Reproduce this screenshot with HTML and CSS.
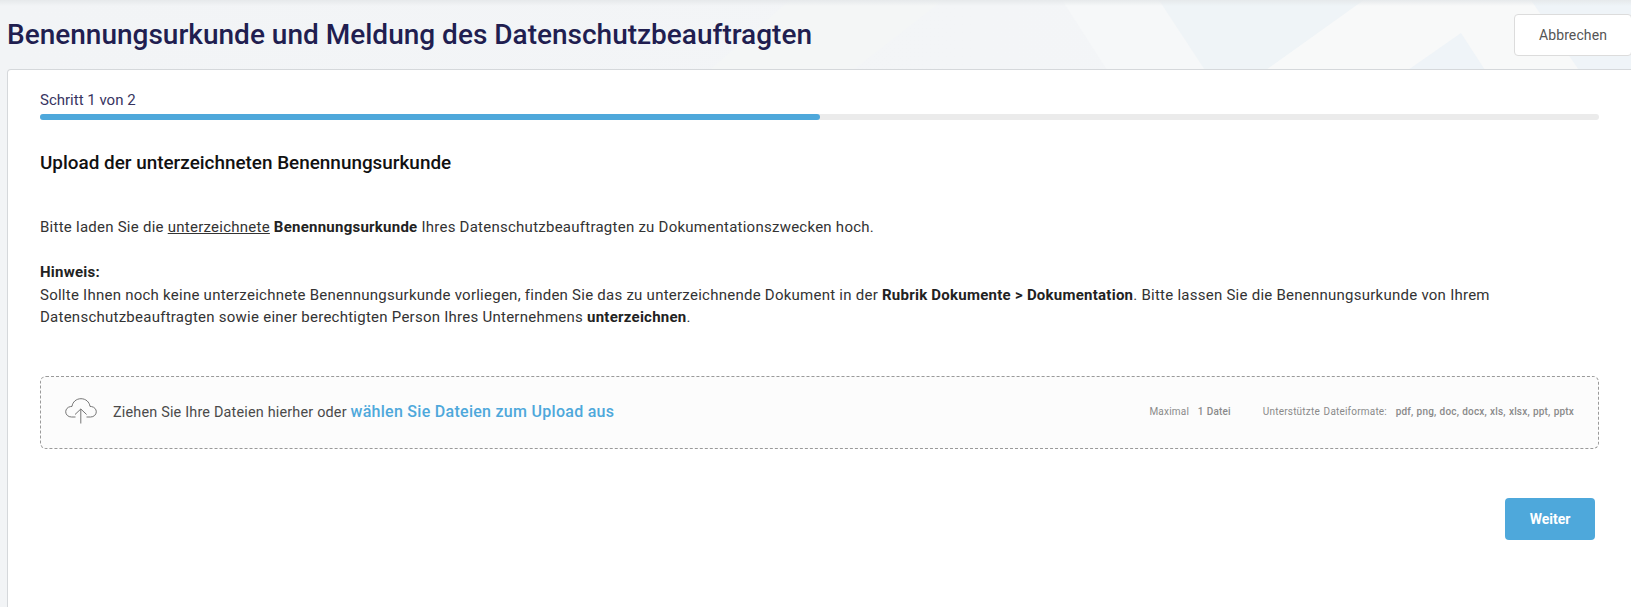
FILE: index.html
```html
<!DOCTYPE html>
<html lang="de">
<head>
<meta charset="utf-8">
<title>Benennungsurkunde</title>
<link rel="stylesheet" href="styles.css">
</head>
<body>
<svg class="backdrop" width="1631" height="70" viewBox="0 0 1631 70" aria-hidden="true">
  <polygon points="790,0 943,0 853,70 710,70" fill="#f4f6f6"/>
  <polygon points="1062,0 1159,0 1205,70 1107,70" fill="#f6f8f9"/>
  <polygon points="1159,0 1364,0 1266,70 1205,70" fill="#eff4f7"/>
  <polygon points="1364,0 1531,0 1579,70 1266,70" fill="#f8f9f9"/>
  <polygon points="1461,33 1485,70 1408,70" fill="#eff4f8"/>
  <polygon points="1531,0 1631,0 1631,70 1579,70" fill="#eff4f8"/>
</svg>
<div class="page">
  <header class="head">
    <h1 class="title">Benennungsurkunde und Meldung des Datenschutzbeauftragten</h1>
    <button class="cancel">Abbrechen</button>
  </header>
  <main class="card">
    <div class="step">Schritt 1 von 2</div>
    <div class="track"><div class="fill"></div></div>
    <h2 class="subtitle">Upload der unterzeichneten Benennungsurkunde</h2>
    <p class="para">Bitte laden Sie die <u>unterzeichnete</u> <b>Benennungsurkunde</b> Ihres Datenschutzbeauftragten zu Dokumentationszwecken hoch.</p>
    <p class="para hint"><b>Hinweis:</b><br>Sollte Ihnen noch keine unterzeichnete Benennungsurkunde vorliegen, finden Sie das zu unterzeichnende Dokument in der <b>Rubrik Dokumente &gt; Dokumentation</b>. Bitte lassen Sie die Benennungsurkunde von Ihrem Datenschutzbeauftragten sowie einer berechtigten Person Ihres Unternehmens <b>unterzeichnen</b>.</p>
    <div class="drop">
      <svg class="cloud" width="32" height="26" viewBox="0 0 32 26" fill="none" stroke="#757575" stroke-width="1">
        <path d="M10.500 19H6.500C3.200 19 .7 16.700 .7 13.800c0-2.600 2-4.800 4.700-5.200l1.600-.2C7.600 4 11.200 .7 16 .7s8.400 3.300 9 7.700l1.600.2c2.700.4 4.700 2.600 4.700 5.200 0 2.900-2.500 5.200-5.800 5.200H21.500"/>
        <path d="M15.800 25.500V11M10 16.500l5.800-5.500 5.800 5.500"/>
      </svg>
      <span class="drop-text">Ziehen Sie Ihre Dateien hierher oder <a class="pick">wählen Sie Dateien zum Upload aus</a></span>
      <span class="meta max">Maximal <b>1 Datei</b></span>
      <span class="meta">Unterstützte Dateiformate: <b>pdf, png, doc, docx, xls, xlsx, ppt, pptx</b></span>
    </div>
    <div class="actions"><button class="next">Weiter</button></div>
  </main>
</div>
</body>
</html>
```
FILE: styles.css
```css
* { box-sizing: border-box; }
html, body { margin: 0; height: 607px; overflow: hidden; }
body {
  position: relative;
  font-family: Roboto, "Liberation Sans", sans-serif;
  background: linear-gradient(90deg, #f2f4f6 0%, #f3f5f7 60%, #f3f6f8 100%);
}
body::before {
  content: "";
  position: absolute;
  inset: 0 0 auto 0;
  height: 6px;
  background: linear-gradient(180deg, #e6e9eb, rgba(230,233,235,0));
  z-index: 1;
}
.backdrop { position: absolute; left: 0; top: 0; }
.page { position: relative; padding-left: 7px; height: 100%; display: flex; flex-direction: column; }
.head {
  height: 69px;
  flex: none;
  display: flex;
  justify-content: space-between;
  align-items: flex-start;
}
.title {
  margin: 18px 0 0;
  font-size: 28px;
  line-height: 34px;
  font-weight: 500;
  color: #211e50;
}
.cancel {
  margin-top: 14px;
  width: 118px;
  height: 42px;
  background: #fff;
  border: 1px solid #dcdcdc;
  border-radius: 4px;
  font: 400 14px Roboto, sans-serif;
  letter-spacing: 0.1px;
  color: #555;
  margin-right: -1px;
}
.card {
  flex: 1;
  margin-right: -4px;
  background: #fff;
  border: 1px solid #d5d8db;
  border-bottom: 0;
  border-radius: 4px 4px 0 0;
  padding: 22px 35px 0 32px;
}
.step { font-size: 15px; line-height: 17px; color: #37345f; }
.track { margin-top: 5px; height: 6px; border-radius: 3px; background: #ebebeb; }
.fill { width: 50%; height: 100%; border-radius: 3px; background: #4ea8db; }
.subtitle { margin: 32px 0 0; font-size: 18.9px; line-height: 22px; font-weight: 500; color: #111; }
.para { margin: 0; font-size: 15px; line-height: 22.5px; color: #333; letter-spacing: 0.25px; }
.para b { font-weight: 700; color: #222; }
.subtitle + .para { margin-top: 42px; }
.hint { margin-top: 22.5px; }
.drop {
  margin-top: 47px;
  height: 73px;
  display: flex;
  align-items: center;
  background: #fcfcfc;
  border: 1px dashed #9a9a9a;
  border-radius: 6px;
  padding: 0 24px 2px;
}
.cloud { flex: none; }
.drop-text { margin-left: 16px; font-size: 14.4px; font-weight: 400; color: #4a4a4a; letter-spacing: 0.19px; }
.pick { font-size: 16px; color: #4ea8db; font-weight: 500; letter-spacing: 0.28px; }
.meta { font-size: 10px; color: #8a8a8a; letter-spacing: 0.2px; word-spacing: 1px; }
.meta b { font-weight: 500; margin-left: 5px; letter-spacing: 0.18px; word-spacing: 0.5px; }
.max { margin-left: auto; margin-right: 32px; }
.actions { display: flex; justify-content: flex-end; margin-top: 49px; padding-right: 4px; }
.next {
  width: 90px;
  height: 42px;
  border: 0;
  border-radius: 4px;
  background: #4ea8db;
  color: #fff;
  font: 700 14px Roboto, sans-serif;
}
```
